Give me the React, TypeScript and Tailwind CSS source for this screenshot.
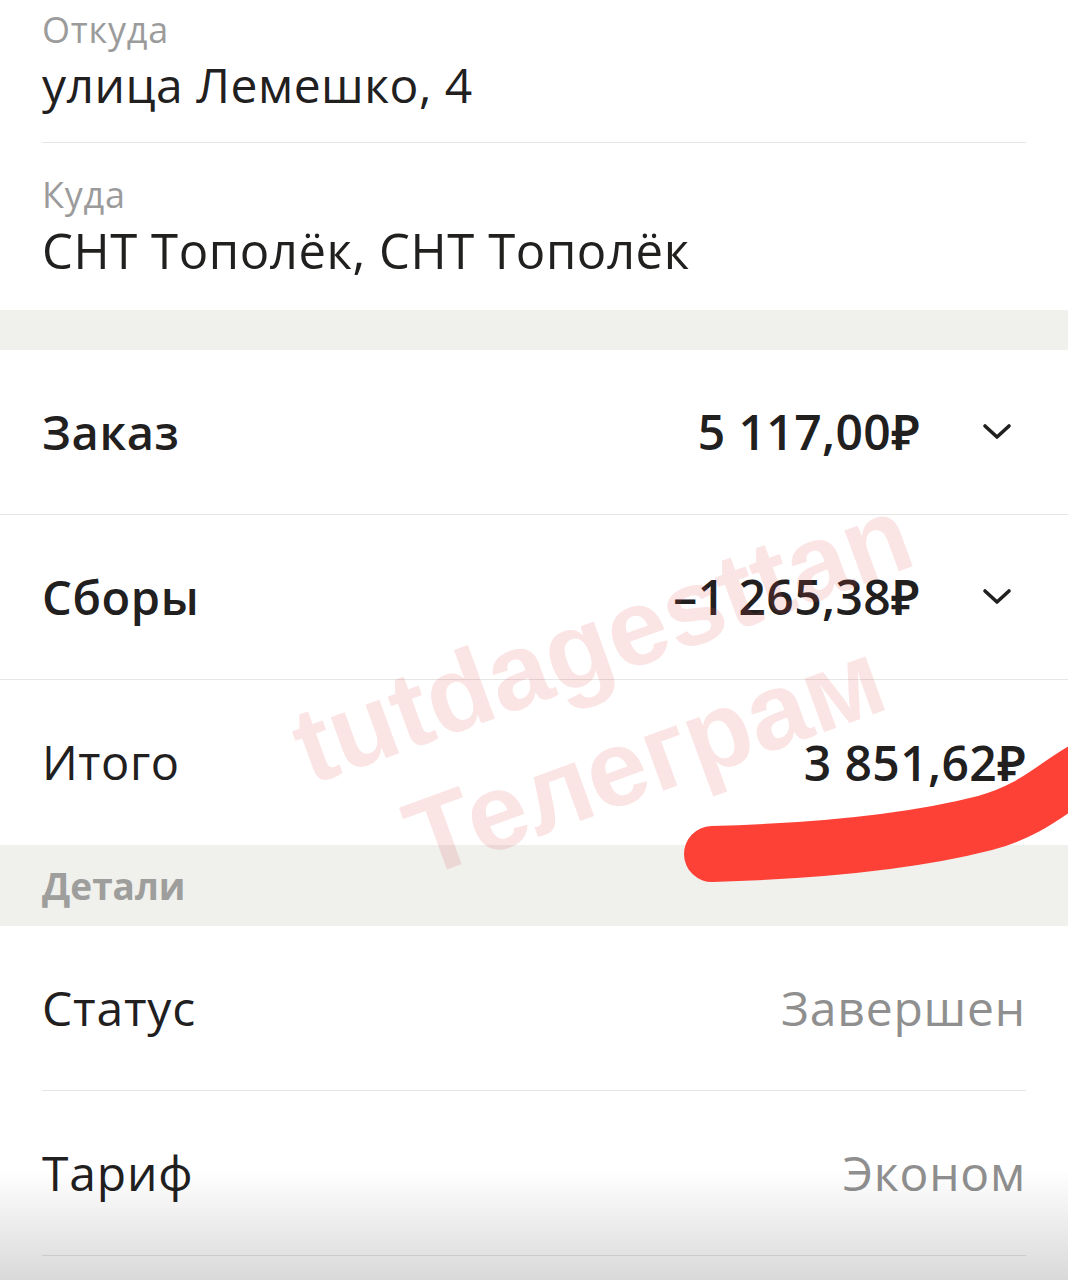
import React from "react";

const font = "font-['Open_Sans','Noto_Sans',sans-serif]";

function Chevron() {
  return (
    <svg width="30" height="18" viewBox="0 0 30 18" className="ml-[62px] mr-[56px]">
      <path d="M3 3 L15 14 L27 3" fill="none" stroke="#21201f" strokeWidth="3.6" strokeLinecap="round" strokeLinejoin="round" />
    </svg>
  );
}

function SumRow({ label, amount, bold, chevron, last }: { label: string; amount: string; bold?: boolean; chevron?: boolean; last?: boolean }) {
  return (
    <div className={`flex h-[165px] items-center pl-[42px] ${chevron ? "" : "pr-[42px]"} ${last ? "" : "border-b border-[#e6e6e4]"}`}>
      <span className={`text-[47px] tracking-[0.6px] text-[#21201f] ${bold ? "font-semibold" : "font-normal"}`}>{label}</span>
      <span className="ml-auto text-[48px] font-semibold tracking-[0.4px] text-[#21201f]">{amount}</span>
      {chevron && <Chevron />}
    </div>
  );
}

function DetailRow({ label, value }: { label: string; value: string }) {
  return (
    <div className="mx-[42px] flex h-[165px] items-center border-b border-[#e6e6e4]">
      <span className="text-[48px] tracking-[0.8px] text-[#21201f]">{label}</span>
      <span className="ml-auto text-[48px] tracking-[0.8px] text-[#8f8f8f]">{value}</span>
    </div>
  );
}

export default function App() {
  return (
    <div className={`relative h-[1280px] w-[1068px] overflow-hidden bg-white ${font}`}>
      {/* addresses */}
      <div className="px-[42px] pt-[10px]">
        <div className="border-b border-[#e6e6e4] pb-[29px]">
          <div className="text-[36px] leading-[40px] tracking-[0.8px] text-[#9b9b9b]">Откуда</div>
          <div className="mt-[7px] text-[48px] leading-[56px] tracking-[0.5px] text-[#21201f]">улица Лемешко, 4</div>
        </div>
        <div className="pb-[32px] pt-[32px]">
          <div className="text-[36px] leading-[40px] tracking-[0.8px] text-[#9b9b9b]">Куда</div>
          <div className="mt-[7px] text-[49px] leading-[56px] tracking-[0.6px] text-[#21201f]">СНТ Тополёк, СНТ Тополёк</div>
        </div>
      </div>

      <div className="h-[40px] bg-[#f0f0ed]" />

      <SumRow label="Заказ" amount="5 117,00₽" bold chevron />
      <SumRow label="Сборы" amount="–1 265,38₽" bold chevron />
      <SumRow label="Итого" amount="3 851,62₽" last />

      <div className="flex h-[81px] items-center bg-[#f0f0ed] px-[42px]">
        <span className="text-[37px] font-bold text-[#9e9e9c]">Детали</span>
      </div>

      <DetailRow label="Статус" value="Завершен" />
      <DetailRow label="Тариф" value="Эконом" />

      {/* watermark */}
      <div className="pointer-events-none absolute left-[602px] top-[640px] -translate-x-1/2 -translate-y-1/2 -rotate-[20deg] whitespace-nowrap font-['Liberation_Sans',sans-serif] text-[108px] font-bold leading-none text-[#e04848]/15">
        tutdagesttan
      </div>
      <div className="pointer-events-none absolute left-[645px] top-[758px] -translate-x-1/2 -translate-y-1/2 -rotate-[20deg] whitespace-nowrap font-['Liberation_Sans',sans-serif] text-[108px] font-bold leading-none text-[#e04848]/15">
        Телеграм
      </div>

      {/* red marker stroke */}
      <svg className="pointer-events-none absolute left-0 top-0" width="1068" height="1280">
        <path d="M712 854 C820 851 915 841 985 823 C1030 811 1050 790 1080 772" fill="none" stroke="#fd4137" strokeWidth="56" strokeLinecap="round" />
      </svg>

      {/* bottom shading */}
      <div className="pointer-events-none absolute bottom-0 left-0 h-[110px] w-full bg-gradient-to-b from-transparent to-black/15" />
    </div>
  );
}
